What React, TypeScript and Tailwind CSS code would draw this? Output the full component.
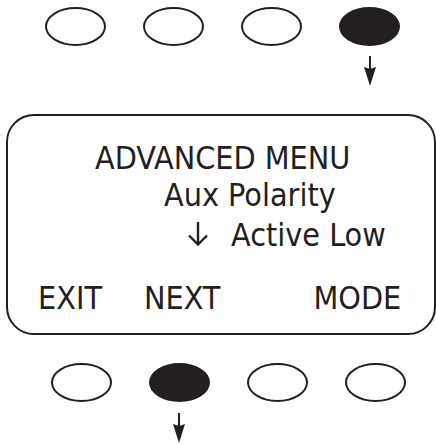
import React from 'react';

const ink = '#231f20';

function Key({ filled }: { filled?: boolean }) {
    return (
        <div
            className={
                'w-[61px] h-[39px] rounded-[50%] border-[2.5px] border-[#231f20] ' +
                (filled ? 'bg-[#231f20]' : 'bg-white')
            }
        />
    );
}

function DownArrow() {
    return (
        <svg width="12" height="30" viewBox="0 0 12 30" className="block">
            <line x1="6" y1="0" x2="6" y2="14" stroke={ink} strokeWidth="2" />
            <polygon points="0,11 6,13 12,11 6,30" fill={ink} />
        </svg>
    );
}

export default function App() {
    return (
        <div
            className="w-[436px] h-[444px] bg-white overflow-hidden text-[#231f20] pt-[7px]"
            style={{ fontFamily: '"DejaVu Sans Condensed", "DejaVu Sans", sans-serif' }}
        >
            {/* top soft keys */}
            <div className="flex gap-[37px] pl-[45px]">
                <Key />
                <Key />
                <Key />
                <Key filled />
            </div>
            <div className="pl-[364px] mt-[10px]">
                <DownArrow />
            </div>

            {/* display */}
            <div className="ml-[6px] mt-[28px] w-[430px] h-[221px] border-[2.5px] border-[#231f20] rounded-[28px] pt-[26px] text-[32px] leading-none">
                <div className="pl-[87px]">ADVANCED MENU</div>
                <div className="pl-[156px] mt-[5px]">Aux Polarity</div>
                <div className="pl-[179px] mt-[8px] flex items-baseline">
                    <svg width="22" height="24" viewBox="0 0 22 24" className="block">
                        <line x1="11" y1="0" x2="11" y2="22.5" stroke={ink} strokeWidth="2.4" />
                        <polyline points="2,13.5 11,22.5 20,13.5" fill="none" stroke={ink} strokeWidth="2.4" />
                    </svg>
                    <span className="ml-[22px]">Active Low</span>
                </div>
                <div className="pl-[30px] mt-[31px] flex">
                    <span>EXIT</span>
                    <span className="ml-[42px]">NEXT</span>
                    <span className="ml-[93px]">MODE</span>
                </div>
            </div>

            {/* bottom soft keys */}
            <div className="flex gap-[37px] pl-[51px] mt-[28px]">
                <Key />
                <Key filled />
                <Key />
                <Key />
            </div>
            <div className="pl-[173px] mt-[11px]">
                <DownArrow />
            </div>
        </div>
    );
}
